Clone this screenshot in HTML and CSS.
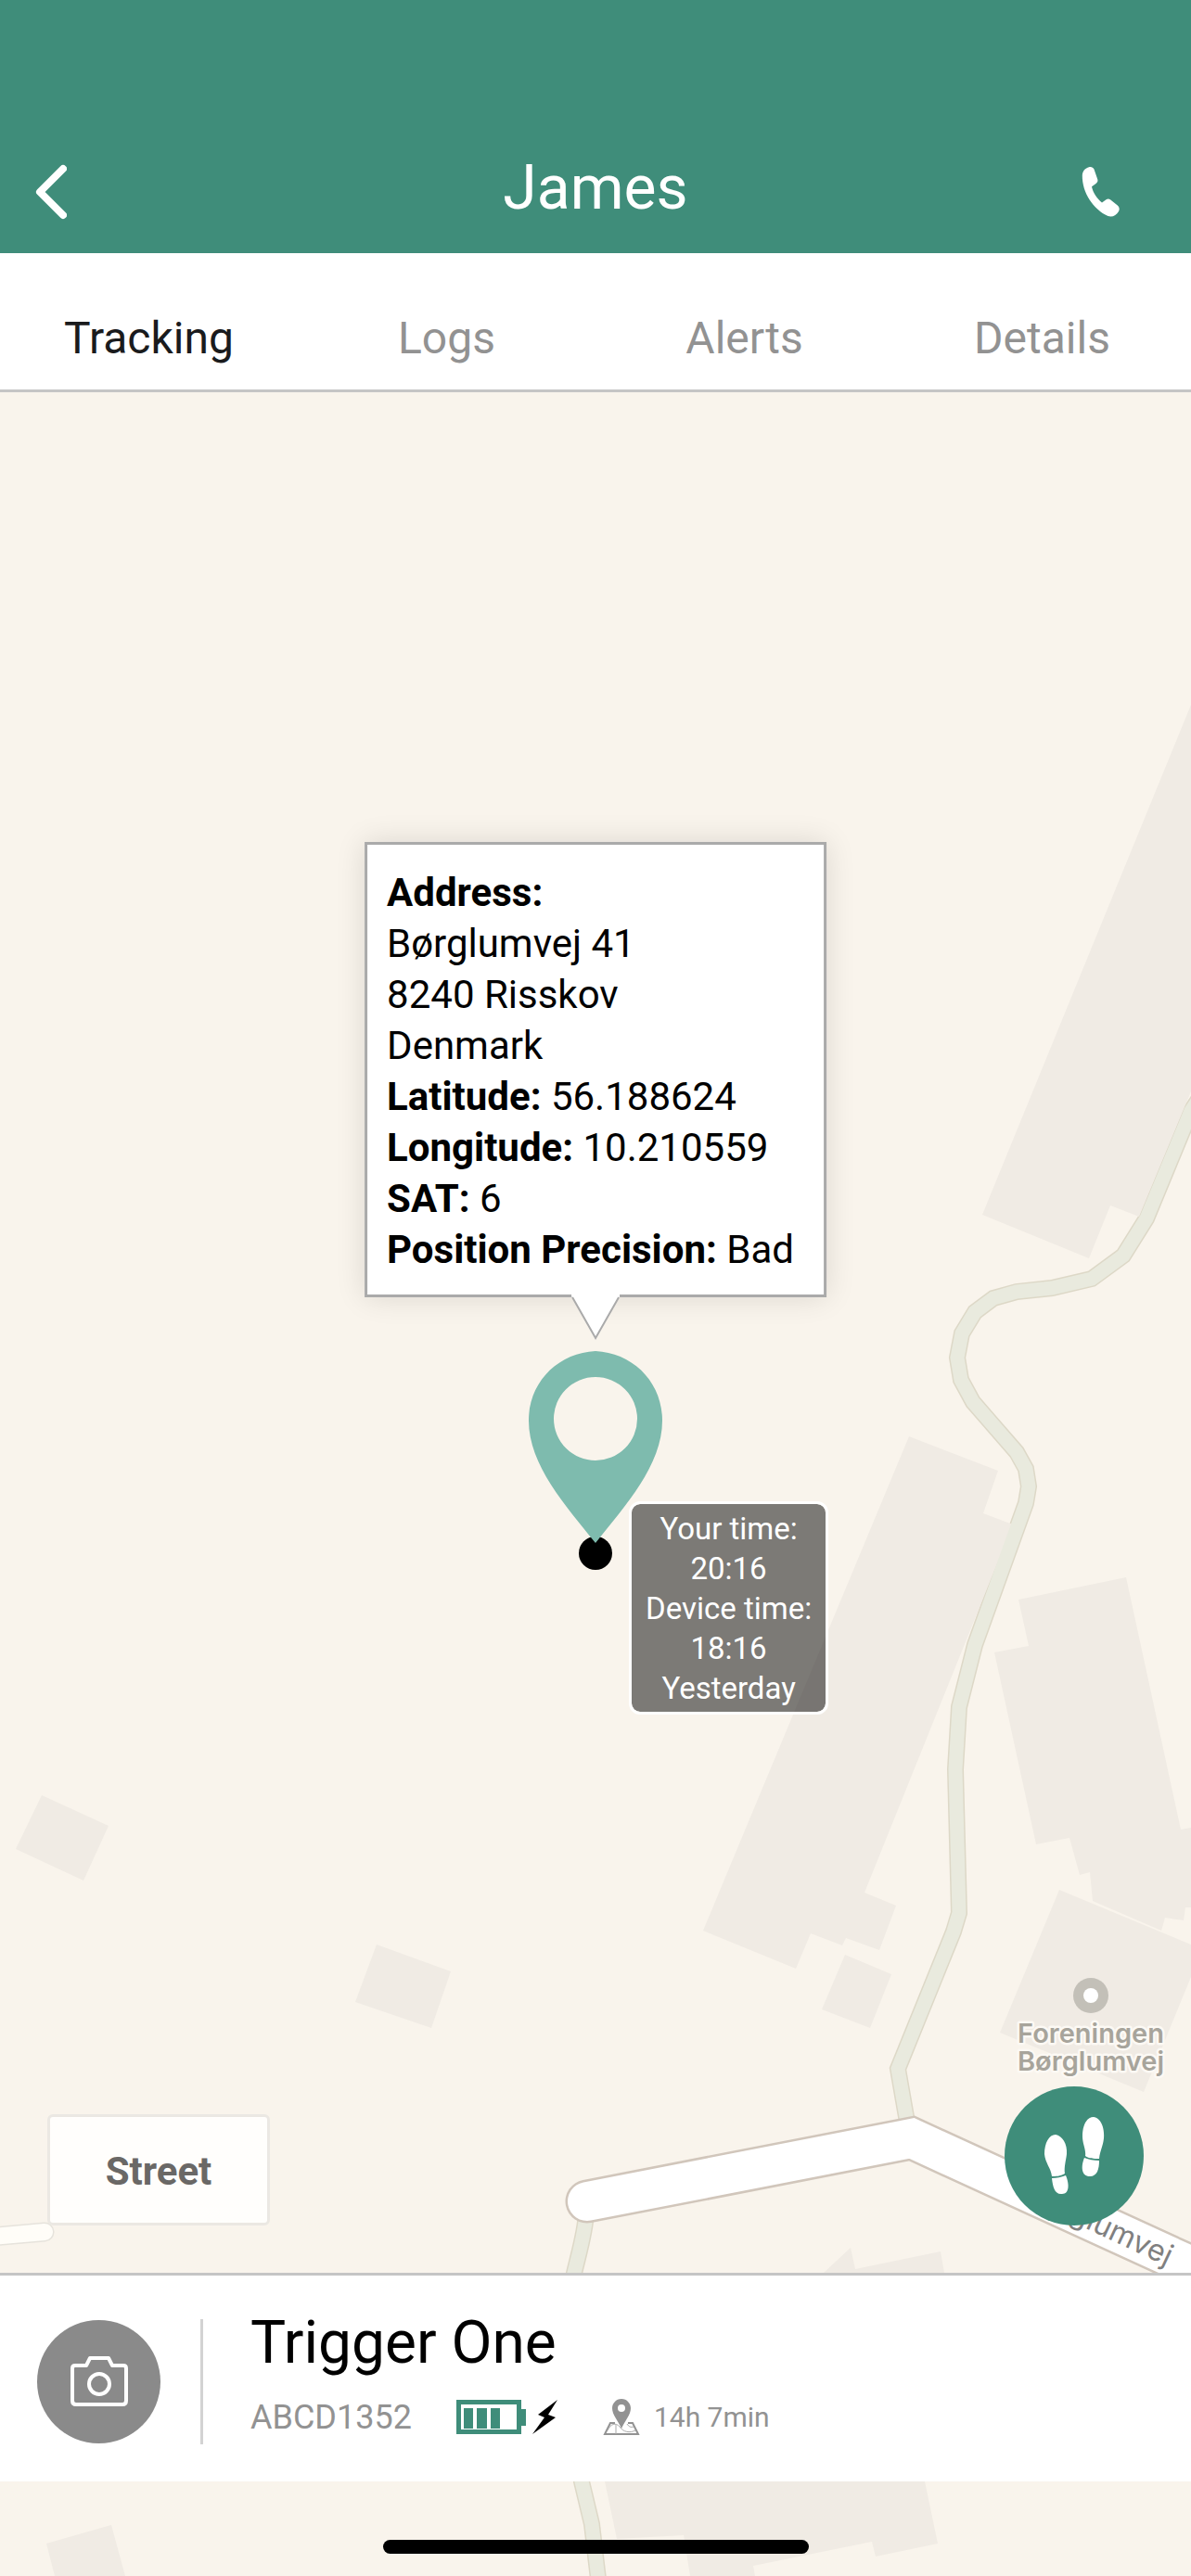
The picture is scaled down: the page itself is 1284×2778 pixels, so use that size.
FILE: index.html
```html
<!DOCTYPE html>
<html lang="en">
<head>
    <meta charset="UTF-8">
    <meta name="viewport" content="width=device-width, initial-scale=1.0">
    <title>James - Tracking</title>
    <link rel="stylesheet" href="styles.css">
</head>
<body>
    <header class="header">
        <button class="icon-button" type="button" aria-label="Back">
            <svg width="36" height="60" viewBox="0 0 36 60">
                <path d="M32 5 L7 30 L32 55" fill="none" stroke="#fff" stroke-width="8" stroke-linecap="round" stroke-linejoin="round"/>
            </svg>
        </button>
        <h1 class="header-title">James</h1>
        <a class="call-link" href="tel:" aria-label="Call">
            <svg width="42" height="56" viewBox="0 0 42 56">
                <path d="M8 1.2 C10.5 .6 12.6 1.6 13.5 3.5 L17.3 14.5 C17.8 16.5 17 17.8 15.5 19 L11 22.2 C12.2 28.5 16.5 35 22 39.5 L26.5 36.2 C28 35.2 29.5 35.2 31 36.2 L38.8 42.5 C41 44.5 41.2 47 40 49 C37.5 53.5 33 55.5 28.5 54 C13 47 .5 29 .8 10 C1 5.5 4 2.2 8 1.2 Z" fill="#fff"/>
            </svg>
        </a>
    </header>

    <nav class="tabs">
        <a class="tab active" href="#tracking">Tracking</a>
        <a class="tab" href="#logs">Logs</a>
        <a class="tab" href="#alerts">Alerts</a>
        <a class="tab" href="#details">Details</a>
    </nav>

    <main class="map">
        <svg class="map-canvas" viewBox="0 423 1284 2355" preserveAspectRatio="xMidYMid slice">
            <!-- footpath edges -->
            <g class="path-edge">
                <path id="footpath" d="M1300 1174 L1284 1198 L1236 1314 L1211 1354 L1177 1379 L1134 1389 L1096 1393 L1071 1400 L1051 1415 L1037 1438 L1032 1464 L1036 1488 L1049 1512 L1096 1566 L1106 1584 L1109 1603 L1106 1621 L1051 1774 L1034 1841 L1030 1908 L1034 2063 L1028 2083 L968 2231 L980 2300"/>
                <path id="footpath-south" d="M632 2385 C631 2420 612 2460 612 2500 C612 2560 619 2620 627 2676 L638 2722 L646 2790"/>
            </g>
            <!-- buildings -->
            <g class="building">
                <path d="M1284 760 L1059 1310 L1174 1357 L1197 1300 L1228 1312 L1284 1177 Z"/>
                <path d="M980 1549 L1076 1586 L1060 1632 L1092 1644 L932 2041 L966 2055 L948 2103 L912 2090 L908 2098 L874 2085 L858 2123 L758 2082 Z"/>
                <path d="M911 2108 L961 2129 L938 2187 L886 2167 Z"/>
                <path d="M1098 1725 L1214 1701 L1273 1973 L1284 1971 L1284 2057 L1278 2057 L1276 2071 L1256 2068 L1252 2082 L1178 2050 L1175 2019 L1164 2022 L1153 1982 L1117 1989 L1072 1782 L1109 1775 Z"/>
                <path d="M1142 2038 L1284 2097 L1284 2132 L1233 2256 L1078 2192 Z"/>
                <path d="M45 1936 L117 1969 L90 2028 L17 1994 Z"/>
                <path d="M406 2097 L486 2126 L465 2187 L383 2159 Z"/>
                <path d="M888 2451 L917 2424 L922 2447 L1014 2428 L1018 2451 Z"/>
                <path d="M652 2676 L665 2738 L737 2734 L744 2778 L814 2778 L812 2767 L940 2741 L944 2757 L1011 2743 L997 2676 Z"/>
                <path d="M50 2743 L120 2723 L135 2778 L59 2778 Z"/>
            </g>
            <g class="path-fill">
                <use href="#footpath"/>
                <use href="#footpath-south"/>
            </g>
            <!-- roads -->
            <path class="lane-edge" d="M-20 2413 L48 2407"/>
            <path class="lane-fill" d="M-20 2413 L48 2407"/>
            <path class="road-edge" d="M633 2374 L983 2306 L1330 2465"/>
            <path class="road-fill" d="M633 2374 L983 2306 L1330 2465"/>
            <text class="road-name" text-anchor="end" transform="translate(1258 2444) rotate(25)">Børglumvej</text>
            <!-- place -->
            <circle cx="1176" cy="2152" r="19" fill="#c3c0b8"/>
            <circle cx="1176" cy="2152" r="8" fill="#fff"/>
            <text class="place-name" text-anchor="middle" x="1176" y="2203">Foreningen</text>
            <text class="place-name" text-anchor="middle" x="1176" y="2233">Børglumvej</text>
        </svg>

        <div class="marker">
            <div class="marker-dot"></div>
            <svg class="marker-pin" width="144" height="210" viewBox="0 0 144 210">
                <path fill-rule="evenodd" d="M72 1 C112 3 144 34 144 76 C144 124 104 168 72 208 C40 168 0 124 0 76 C0 34 32 3 72 1 Z M72 29 A45 45 0 1 0 72 119 A45 45 0 1 0 72 29 Z" fill="#7ebbae"/>
            </svg>
            <div class="marker-time">
                Your time:<br>20:16<br>Device time:<br>18:16<br>Yesterday
            </div>
            <div class="callout">
                <strong>Address:</strong><br>
                Børglumvej 41<br>
                8240 Risskov<br>
                Denmark<br>
                <strong>Latitude:</strong> 56.188624<br>
                <strong>Longitude:</strong> 10.210559<br>
                <strong>SAT:</strong> 6<br>
                <strong>Position Precision:</strong> Bad
                <svg class="callout-tip" width="52" height="51" viewBox="0 0 52 51">
                    <path d="M0 0 H52 V2 L26 49 L0 2 Z" fill="#fff"/>
                    <path d="M1 3 L26 47 L51 3" fill="none" stroke="#aaa" stroke-width="2"/>
                </svg>
            </div>
        </div>

        <div class="map-controls">
            <button class="map-type" type="button">Street</button>
            <button class="steps-button" type="button" aria-label="Show route">
                <svg width="66" height="86" viewBox="0 0 66 86" fill="#fff">
                    <path d="M13 20 C20 21 26 30 25 41 C24 49 22 55 23 62 C18 65 13 65 9 65 C8 56 2 51 1 41 C1 29 6 20 13 20 Z"/>
                    <path d="M9 67 C14 67 19 66 24 64 C28 73 28 84 20 84 C12 85 10 76 9 67 Z"/>
                    <path d="M54 1 C61 2 66 11 65 24 C64 33 61 37 60 46 C54 46 49 46 45 43 C46 36 42 30 42 22 C42 9 47 1 54 1 Z"/>
                    <path d="M44 45 C49 47 54 48 60 48 C60 57 58 65 50 65 C41 65 40 55 44 45 Z"/>
                </svg>
            </button>
        </div>

        <section class="device">
            <button class="avatar" type="button" aria-label="Add photo">
                <svg width="64" height="56" viewBox="0 0 64 56" fill="none" stroke="#fff" stroke-width="4" stroke-linejoin="round">
                    <path d="M6 11 H18 L22 3 H42 L46 11 H58 Q61 11 61 14 V49 Q61 53 57 53 H7 Q3 53 3 49 V14 Q3 11 6 11 Z"/>
                    <circle cx="32" cy="31" r="11"/>
                </svg>
            </button>
            <div class="device-info">
                <h2 class="device-name">Trigger One</h2>
                <div class="device-status">
                    <span class="device-id">ABCD1352</span>
                    <svg class="battery" width="110" height="40" viewBox="0 0 110 40">
                        <path d="M2.500 3.500 H67.500 V35.500 H2.500 Z" fill="none" stroke="#3f8d7a" stroke-width="5"/>
                        <path d="M70 11 H75 V29 H70 Z M8 10 H18 V32 H8 Z M22 10 H33 V32 H22 Z M37 10 H47 V32 H37 Z" fill="#3f8d7a"/>
                        <path d="M109 1 L88 17 L95 20 L82 38 L107 20 L99 17 Z" fill="#000"/>
                    </svg>
                    <span class="last-seen">
                        <svg width="40" height="40" viewBox="0 0 40 40">
                            <path fill-rule="evenodd" d="M20 0 C26 0 30 5 30 10 C30 17 24 23 20 32 C16 23 10 17 10 10 C10 5 14 0 20 0 Z M20 6 A4 4 0 1 0 20 14 A4 4 0 1 0 20 6 Z" fill="#929292"/>
                            <path d="M13 26 H8 L2 38 H38 L32 26 H27" fill="none" stroke="#929292" stroke-width="2"/>
                            <path d="M5 34 C8 27 14 25 18 30 C22 36 29 37 35 34 M14 28 V38 M26 27 C28 30 30 31 33 30" fill="none" stroke="#aaa" stroke-width="1"/>
                        </svg>
                        14h 7min
                    </span>
                </div>
            </div>
        </section>

        <div class="home-area">
            <div class="home-indicator"></div>
        </div>
    </main>
</body>
</html>
```
FILE: styles.css
```css
* {
    box-sizing: border-box;
}
body {
    margin: 0;
    min-height: 100vh;
    display: flex;
    flex-direction: column;
    font-family: Roboto, "Liberation Sans", sans-serif;
    color: #000;
    background: #f9f4ec;
}
button {
    padding: 0;
    border: 0;
    background: none;
    font-family: inherit;
    cursor: pointer;
}
svg {
    display: block;
}
h1,
h2 {
    margin: 0;
    font-weight: 400;
}

/* header */
.header {
    display: grid;
    grid-template-columns: 1fr auto 1fr;
    align-items: center;
    padding: 164px 36px 32px;
    background: #3f8d7a;
    color: #fff;
}
.header-title {
    font-size: 66px;
    line-height: 77px;
}
.icon-button {
    justify-self: start;
    margin-top: 8px;
}
.call-link {
    justify-self: end;
    margin-top: 8px;
    margin-right: 40px;
}

/* tabs */
.tabs {
    display: grid;
    grid-template-columns: repeat(4, 1fr);
    background: #fff;
    border-bottom: 3px solid #c5c5c5;
}
.tab {
    padding: 64px 0 27px;
    font-size: 48px;
    line-height: 56px;
    text-align: center;
    text-decoration: none;
    color: #929292;
}
.tab.active {
    color: #1a1b1d;
}

/* map */
.map {
    position: relative;
    flex: 1;
    display: flex;
    flex-direction: column;
    justify-content: flex-end;
    overflow: hidden;
}
.map-canvas {
    position: absolute;
    inset: 0;
    width: 100%;
    height: 100%;
}
.building {
    fill: #f0ebe4;
}
.path-edge {
    fill: none;
    stroke: #ddd8c7;
    stroke-width: 18;
}
.path-fill {
    fill: none;
    stroke: #e9eade;
    stroke-width: 15;
}
.lane-edge,
.lane-fill,
.road-edge,
.road-fill {
    fill: none;
    stroke-linecap: round;
}
.lane-edge {
    stroke: #e6e3dc;
    stroke-width: 21;
}
.lane-fill {
    stroke: #fffdf8;
    stroke-width: 18;
}
.road-edge {
    stroke: #d1c6bb;
    stroke-width: 47;
}
.road-fill {
    stroke: #fff;
    stroke-width: 42;
}
.road-name {
    font-family: Inter, sans-serif;
    font-size: 32px;
    fill: #808080;
}
.place-name {
    font-family: Inter, sans-serif;
    font-size: 29px;
    font-weight: 600;
    fill: #a7a49b;
    stroke: #fcf9f4;
    stroke-width: 5px;
    stroke-linejoin: round;
    paint-order: stroke;
}

/* marker, anchored on its dot */
.marker {
    position: absolute;
    left: 50%;
    top: 1252px;
}
.marker-dot {
    position: absolute;
    left: -18px;
    top: -18px;
    width: 36px;
    height: 36px;
    border-radius: 50%;
    background: #000;
}
.marker-pin {
    position: absolute;
    left: -72px;
    bottom: 9px;
}
.marker-time {
    position: absolute;
    left: 36px;
    top: -56px;
    padding: 5px 15px 4px;
    border: 3px solid #fff;
    border-radius: 12px;
    background: rgba(0, 0, 0, 0.5);
    background-clip: padding-box;
    color: #fff;
    font-size: 33px;
    line-height: 43px;
    text-align: center;
    white-space: nowrap;
}
.callout {
    position: absolute;
    left: 0;
    bottom: 276px;
    transform: translateX(-50%);
    padding: 24px 32px 21px 21px;
    border: 3px solid #aaa;
    background: #fff;
    box-shadow: 0 0 30px rgba(0, 0, 0, 0.12);
    font-size: 42px;
    line-height: 55px;
    white-space: nowrap;
}
.callout-tip {
    position: absolute;
    left: 50%;
    top: 100%;
    margin-left: -26px;
}

.map-controls {
    position: relative;
    display: flex;
    justify-content: space-between;
    align-items: flex-end;
    padding: 0 51px 51px;
}
.map-type {
    width: 240px;
    height: 120px;
    padding-top: 3px;
    border: 3px solid #ebe8e3;
    border-radius: 6px;
    background: #fffefc;
    color: #6a6866;
    font-size: 42px;
    font-weight: 700;
}
.steps-button {
    display: flex;
    align-items: center;
    justify-content: center;
    width: 150px;
    height: 150px;
    border-radius: 50%;
    background: #3f8d7a;
}

/* device card */
.device {
    position: relative;
    display: flex;
    align-items: center;
    gap: 43px;
    min-height: 225px;
    padding: 6px 40px 0;
    border-top: 3px solid #c5c5c5;
    background: #fff;
}
.avatar {
    display: flex;
    align-items: center;
    justify-content: center;
    width: 133px;
    height: 133px;
    border-radius: 50%;
    background: #8a8a8a;
}
.device-info {
    height: 135px;
    padding-left: 51px;
    border-left: 3px solid #d3d3d3;
}
.device-name {
    margin-top: -12px;
    font-size: 64px;
    line-height: 76px;
}
.device-status {
    display: flex;
    align-items: center;
    margin-top: 20px;
    color: #929292;
    font-size: 36px;
    line-height: 44px;
}
.battery {
    margin-left: 48px;
}
.last-seen {
    display: flex;
    align-items: center;
    gap: 15px;
    margin-left: 48px;
    font-size: 30px;
}

.home-area {
    position: relative;
    height: 102px;
    padding-top: 63px;
}
.home-indicator {
    width: 459px;
    height: 15px;
    margin: 0 auto;
    border-radius: 8px;
    background: #000;
}
```
